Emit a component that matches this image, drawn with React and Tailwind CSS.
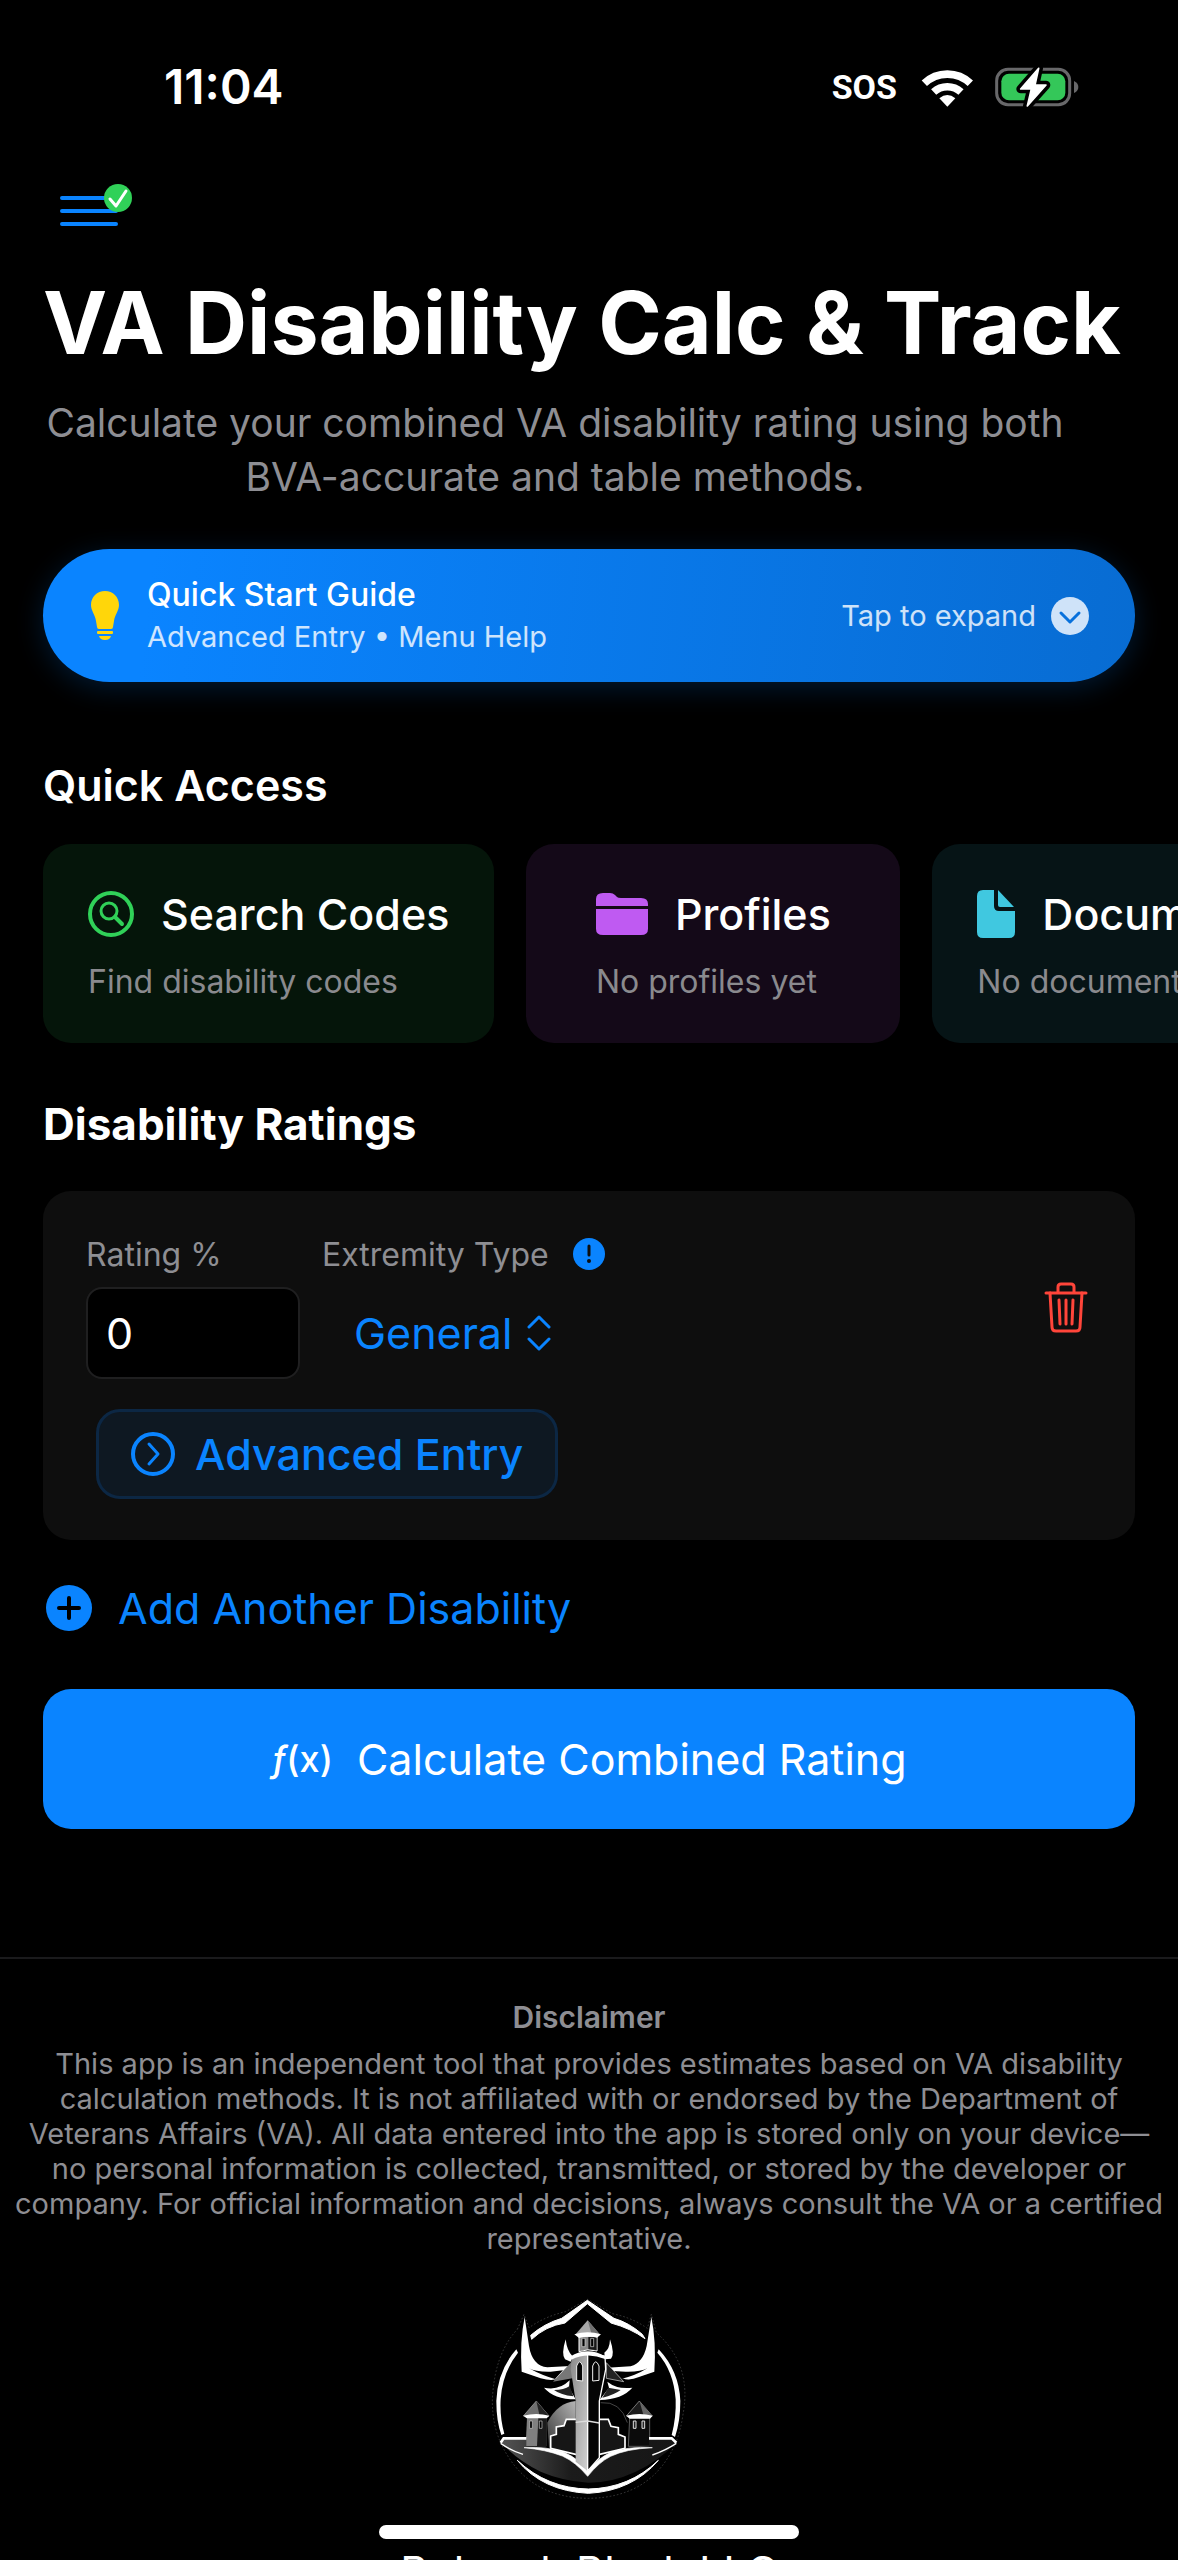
import { useState } from "react";

const hideScrollbar = "[scrollbar-width:none]";

function WifiIcon() {
  return (
    <svg viewBox="303 45 159 123" className="h-[41px] w-[53px]" aria-hidden="true">
      <g fill="none" stroke="#fff" strokeWidth="23">
        <path d="M313 94 A100 100 0 0 1 451 94" />
        <path d="M341 120 A61 61 0 0 1 423 120" />
      </g>
      <path d="M358 139 Q382 119 406 139 L382 164 Z" fill="#fff" />
    </svg>
  );
}

function BatteryIcon() {
  return (
    <svg viewBox="516 45 255 126" className="h-[42px] w-[85px]" aria-hidden="true">
      <rect x="524" y="55" width="219" height="106" rx="34" fill="none" stroke="#68686a" strokeWidth="9" />
      <path d="M756 90 Q769 96 769 108 Q769 120 756 126 Z" fill="#68686a" />
      <rect x="538" y="68" width="192" height="80" rx="23" fill="#34c759" />
      <path
        d="M650 52 L596 114 H628 L616 165 L672 102 H639 Z"
        fill="#fff"
        stroke="#000"
        strokeWidth="26"
        strokeLinejoin="round"
      />
      <path
        d="M650 52 L596 114 H628 L616 165 L672 102 H639 Z"
        fill="#fff"
        stroke="#fff"
        strokeWidth="5"
        strokeLinejoin="round"
      />
    </svg>
  );
}

function StatusBar() {
  return (
    <div className="flex h-[174px] shrink-0 items-center justify-between pl-[164px] pr-[99px]">
      <span className="text-[48px] font-semibold leading-none">11:04</span>
      <div className="flex items-center gap-5">
        <span className="mr-1 font-['Roboto',sans-serif] text-[34px] font-bold leading-none">SOS</span>
        <WifiIcon />
        <BatteryIcon />
      </div>
    </div>
  );
}

function MenuIcon() {
  return (
    <svg viewBox="0 0 76 46" className="h-[46px] w-[76px]" aria-hidden="true">
      <g stroke="#0a84ff" strokeWidth="4" strokeLinecap="round">
        <path d="M3 14H57M3 27H57M3 40H57" />
      </g>
      <circle cx="59" cy="14" r="14" fill="#30d158" />
      <path d="M51 15 L57 22 L67 7" fill="none" stroke="#fff" strokeWidth="3" strokeLinecap="round" strokeLinejoin="round" />
    </svg>
  );
}

function BulbIcon() {
  return (
    <svg viewBox="0 0 30 50" className="h-[50px] w-[30px]" fill="#ffd60a" aria-hidden="true">
      <path d="M15 0 C7 0 1 6 1 14 C1 20 5 23 6 30 L7 36 Q7 38 9 38 H21 Q23 38 23 36 L24 30 C25 23 29 20 29 14 C29 6 23 0 15 0 Z" />
      <rect x="7" y="40" width="16" height="3" rx="1" />
      <path d="M9 45 H21 Q20 49 15 49 Q10 49 9 45 Z" />
    </svg>
  );
}

function SearchCodesIcon() {
  return (
    <svg viewBox="0 0 46 46" className="size-[46px]" fill="none" stroke="#30d158" strokeLinecap="round" aria-hidden="true">
      <circle cx="23" cy="23" r="21" strokeWidth="4" />
      <circle cx="21" cy="20" r="8" strokeWidth="3" />
      <path d="M27 26 L34 33" strokeWidth="4" />
    </svg>
  );
}

function FolderIcon() {
  return (
    <svg viewBox="0 0 52 42" className="h-[42px] w-[52px]" fill="#bf5af2" aria-hidden="true">
      <path d="M0 13 V6 Q0 0 7 0 H14 Q17 0 19 2 L21 4 Q22 5 25 5 H45 Q52 5 52 11 V13 Z" />
      <path d="M0 16 H52 V36 Q52 42 45 42 H7 Q0 42 0 36 Z" />
    </svg>
  );
}

function DocumentIcon() {
  return (
    <svg viewBox="0 0 38 48" className="h-12 w-[38px]" fill="#40c8e0" aria-hidden="true">
      <path d="M6 0 H17 V16 Q17 21 22 21 H38 V42 Q38 48 32 48 H6 Q0 48 0 42 V6 Q0 0 6 0 Z" />
      <path d="M21 0 L37 17 H23 Q21 17 21 15 Z" />
    </svg>
  );
}

function TrashIcon() {
  return (
    <svg viewBox="0 0 44 52" className="h-[52px] w-11" fill="none" stroke="#ff453a" strokeLinecap="round" strokeLinejoin="round" aria-hidden="true">
      <path d="M2 12 H42" strokeWidth="3" />
      <path d="M14 11 V6 Q14 3 17 3 H27 Q30 3 30 6 V11" strokeWidth="3" />
      <path d="M6 12 L8 46 Q8 50 12 50 H32 Q36 50 36 46 L38 12" strokeWidth="3" />
      <path d="M15 19 L16 43 M22 19 V43 M29 19 L28 43" strokeWidth="3" />
    </svg>
  );
}

function CompanyLogo() {
  return (
    <svg viewBox="0 0 660 660" className="size-[220px]" role="img" aria-label="Bulwark Black logo">
      <defs>
        <linearGradient id="stone" x1="0" y1="0" x2="1" y2="1">
          <stop offset="0" stopColor="#8a8a8a" />
          <stop offset="1" stopColor="#d2d2d2" />
        </linearGradient>
        <linearGradient id="dome" x1="1" y1="0" x2="0" y2="1">
          <stop offset="0" stopColor="#b5b5b5" />
          <stop offset="1" stopColor="#3a3a3a" />
        </linearGradient>
        <linearGradient id="ground" x1="0" y1="0" x2="1" y2="0">
          <stop offset="0" stopColor="#555" />
          <stop offset="0.4" stopColor="#1b1b1b" />
          <stop offset="1" stopColor="#161616" />
        </linearGradient>
      </defs>

      {/* outer ring */}
      <path d="M115 115 L135 70 L150 110 Q200 75 260 62 L325 25 L400 68 Q460 80 505 112 L517 70 L532 125 Q640 220 612 370 Q605 420 590 455 Q520 620 328 622 Q140 620 65 455 Q40 400 40 330 Q45 190 115 115" fill="none" stroke="#555" strokeWidth="2" strokeDasharray="5 6" />
      <path d="M158 145 Q200 105 258 96 L325 38 L396 96 Q455 112 498 143 L490 130 Q450 95 405 82 L325 28 L248 82 Q195 98 155 133 Z" fill="#fff" stroke="#fff" strokeWidth="3" />
      <path d="M112 175 Q55 240 52 330 Q52 390 67 432 L76 428 Q62 380 65 325 Q70 245 117 185 Z" fill="#fff" />
      <path d="M539 175 Q600 240 604 330 Q604 390 588 438 L578 432 Q592 380 590 325 Q584 240 535 185 Z" fill="#fff" />
      <path d="M115 508 Q190 600 328 607 Q460 600 538 508 Q450 592 328 594 Q205 592 115 508 Z" fill="#fff" stroke="#fff" strokeWidth="3" />

      {/* horns */}
      <path d="M137 78 L150 165 Q160 225 205 229 L275 225 L250 252 Q235 275 185 262 L128 242 Q122 150 137 78 Z" fill="#fff" />
      <path d="M517 78 L503 165 Q492 215 455 226 L385 230 L415 252 Q440 275 480 258 L526 242 Q532 150 517 78 Z" fill="#fff" />
      <path d="M150 232 Q170 243 215 242 L252 238 L228 264 Q190 254 150 232 Z" fill="#000" />
      <path d="M505 232 Q485 243 440 242 L400 240 L426 264 Q470 254 505 232 Z" fill="#000" />
      <path d="M260 145 Q246 190 258 205 L275 212 L280 195 Q264 180 260 145 Z M393 145 Q408 190 396 203 L378 205 L376 185 Q392 175 393 145 Z" fill="#fff" />
      <path d="M195 290 Q240 300 272 268 L270 290 L290 325 Q225 325 195 290 Z M460 290 Q415 296 385 272 L390 290 L362 327 Q430 325 460 290 Z" fill="#fff" />
      <path d="M225 297 Q255 297 272 285 L283 316 Q245 312 225 297 Z M388 290 L425 297 Q405 312 370 320 Z" fill="#222" />
      <path d="M222 272 L278 212 L280 262 Z" fill="#777" />
      <path d="M434 272 L382 215 L382 262 Z" fill="#222" stroke="#ddd" strokeWidth="2" />

      {/* dome and gate */}
      <path d="M205 395 Q235 335 290 330 V470 H210 Z" fill="url(#dome)" />
      <path d="M365 335 Q425 330 445 395" fill="none" stroke="#666" strokeWidth="2" />
      <path d="M215 472 V435 L232 430 V408 L255 404 L262 385 H388 L396 406 L418 410 V430 L438 438 V472 L362 490 H290 Z" fill="#161616" stroke="#fff" strokeWidth="5" />

      {/* side towers */}
      <path d="M144 380 H202 V466 H140 Z" fill="#808080" />
      <path d="M178 380 H202 V466 H174 Z" fill="#1a1a1a" />
      <path d="M172 330 L210 375 H133 Z" fill="#6f6f6f" stroke="#aaa" strokeWidth="2" />
      <path d="M172 330 L210 375 H182 Z" fill="#222" />
      <path d="M133 374 Q172 364 211 374 L203 382 H143 Z" fill="#fff" />
      <path d="M152 390 h8 v22 h-8 Z M181 390 h8 v22 h-8 Z" fill="#000" stroke="#ccc" strokeWidth="2" />
      <path d="M452 380 H512 V466 H448 Z" fill="#0b0b0b" stroke="#888" strokeWidth="2" />
      <path d="M481 330 L520 375 H442 Z" fill="#1b1b1b" stroke="#aaa" strokeWidth="2" />
      <path d="M482 332 L520 375 H494 Z" fill="#666" />
      <path d="M442 374 Q481 364 521 374 L513 383 H452 Z" fill="#fff" />
      <path d="M463 390 h8 v22 h-8 Z M489 390 h8 v22 h-8 Z" fill="#222" stroke="#ddd" strokeWidth="3" />

      {/* ground */}
      <path d="M65 452 L74 442 H142 V466 L200 470 Q265 482 326 550 Q390 482 445 472 L510 466 V442 L580 440 L594 452 Q540 510 470 542 Q400 575 328 575 Q250 570 185 542 Q110 505 65 452 Z" fill="url(#ground)" />
      <path d="M65 455 L74 442 H142 M510 442 H578 L592 455" fill="none" stroke="#fff" strokeWidth="8" />
      <path d="M135 470 Q205 466 255 484 Q300 503 326 541 Q355 503 395 484 Q445 466 520 470 Q440 474 395 496 Q360 513 326 556 Q290 513 250 495 Q200 476 135 470 Z" fill="#fff" stroke="#fff" strokeWidth="2" />
      <path d="M65 457 Q95 478 132 490 M592 457 Q560 478 520 492" fill="none" stroke="#fff" strokeWidth="4" />

      {/* main tower */}
      <path d="M278 195 L326 188 V540 L290 512 V330 L275 235 Z" fill="url(#stone)" />
      <path d="M326 188 L378 195 L380 235 L361 330 V500 L326 540 Z" fill="#050505" stroke="#fff" strokeWidth="4" />
      <path d="M273 197 Q326 165 380 197 L378 204 Q326 182 277 206 Z" fill="#fff" />
      <path d="M293 268 V225 Q302 200 311 225 V270 Z M341 270 V225 Q350 200 360 225 V268 Z" fill="#050505" stroke="#eee" strokeWidth="3" />
      <path d="M290 394 L326 390 L361 396" fill="none" stroke="#ddd" strokeWidth="4" />
      <path d="M300 136 H354 V180 Q326 172 300 182 Z" fill="#888" stroke="#fff" strokeWidth="3" />
      <path d="M328 138 H353 V178 L328 174 Z" fill="#181818" />
      <path d="M309 142 h9 v25 h-9 Z M335 142 h9 v25 h-9 Z" fill="#000" stroke="#ddd" strokeWidth="2" />
      <path d="M326 88 L362 130 H290 Z" fill="#a8a8a8" />
      <path d="M326 88 L362 130 H338 Z" fill="#707070" />
      <path d="M286 130 Q326 118 366 130 L354 140 Q326 132 300 141 Z" fill="#fff" />
    </svg>
  );
}

const quickAccess = [
  { title: "Search Codes", note: "Find disability codes", icon: SearchCodesIcon, tint: "bg-[#05150a]" },
  { title: "Profiles", note: "No profiles yet", icon: FolderIcon, tint: "bg-[#140918]" },
  { title: "Documents", note: "No documents yet", icon: DocumentIcon, tint: "bg-[#061416]" },
];

function QuickCard({ title, note, icon: Icon, tint }) {
  return (
    <button type="button" className={`flex h-[199px] min-w-[374px] shrink-0 justify-center rounded-[28px] px-[45px] pt-[42px] text-left ${tint}`}>
      <span className="flex flex-col gap-[18px]">
        <span className="flex h-14 items-center gap-[27px] text-[43px] font-medium">
          <Icon />
          {title}
        </span>
        <span className="text-[32px] leading-[44px] text-[#8a8a8e]">{note}</span>
      </span>
    </button>
  );
}

function RatingCard() {
  const [rating, setRating] = useState("0");

  return (
    <div className="mt-[39px] flex items-start justify-between rounded-[28px] bg-[#0e0e0e] px-[43px] pb-[41px] pt-10">
      <div>
        <div className="flex gap-[22px]">
          <div className="flex w-[214px] flex-col">
            <label htmlFor="rating" className="h-14 text-[32px] leading-[48px] text-[#8e8e93]">
              Rating %
            </label>
            <input
              id="rating"
              inputMode="numeric"
              value={rating}
              onChange={(e) => setRating(e.target.value)}
              className="h-[92px] w-full rounded-2xl border-2 border-[#1f1f20] bg-black px-[18px] text-[43px] outline-none"
            />
          </div>

          <div className="flex flex-col">
            <div className="flex h-14 items-start gap-6">
              <label htmlFor="extremity" className="text-[32px] leading-[48px] text-[#8e8e93]">
                Extremity Type
              </label>
              <button type="button" aria-label="About extremity type" className="mt-[7px]">
                <svg viewBox="0 0 32 32" className="size-8" aria-hidden="true">
                  <circle cx="16" cy="16" r="16" fill="#0a84ff" />
                  <path d="M16 8 V17" stroke="#0e0e0e" strokeWidth="3" strokeLinecap="round" />
                  <circle cx="16" cy="23" r="2" fill="#0e0e0e" />
                </svg>
              </button>
            </div>
            <div className="flex h-[92px] items-center gap-3.5 pl-8 text-[#0a84ff]">
              <select id="extremity" className="appearance-none bg-transparent text-[43px] outline-none [field-sizing:content]">
                <option>General</option>
                <option>Upper</option>
                <option>Lower</option>
              </select>
              <svg viewBox="0 0 26 36" className="h-9 w-[26px]" fill="none" stroke="currentColor" strokeWidth="3" strokeLinecap="round" strokeLinejoin="round" aria-hidden="true">
                <path d="M3 12 L13 2 L23 12 M3 24 L13 34 L23 24" />
              </svg>
            </div>
          </div>
        </div>

        <button
          type="button"
          className="ml-[10px] mt-[30px] flex h-[90px] items-center gap-5 rounded-3xl border-[3px] border-[#0c2744] bg-[#0e1822] px-8 text-[43px] font-medium text-[#0a84ff]"
        >
          <svg viewBox="0 0 44 44" className="size-11" fill="none" stroke="currentColor" strokeLinecap="round" strokeLinejoin="round" aria-hidden="true">
            <circle cx="22" cy="22" r="20" strokeWidth="4" />
            <path d="M18 12 L27 22 L18 32" strokeWidth="3" />
          </svg>
          Advanced Entry
        </button>
      </div>

      <button type="button" aria-label="Delete disability" className="mr-1 mt-[50px]">
        <TrashIcon />
      </button>
    </div>
  );
}

export default function App() {
  return (
    <div className="relative flex h-screen flex-col overflow-hidden bg-black font-['Inter',sans-serif] text-white">
      <StatusBar />

      <div className={`min-h-0 flex-1 overflow-y-auto overflow-x-hidden ${hideScrollbar}`}>
        <main className="px-[43px]">
          <button type="button" aria-label="Menu" className="ml-4 flex h-[66px] items-center">
            <MenuIcon />
          </button>

          <h1 className="mt-[33px] whitespace-nowrap text-[86px] font-bold leading-[100px]">
            VA Disability Calc &amp; Track
          </h1>
          <p className="mr-[68px] mt-[23px] text-center text-[39px] leading-[54px] text-[#8e8e93]">
            Calculate your combined VA disability rating using both BVA-accurate and table methods.
          </p>

          <button
            type="button"
            className="mt-[45px] flex h-[133px] w-full items-center rounded-full bg-[linear-gradient(97deg,#0a84ff_10%,#086cd2)] pl-[47px] pr-[46px] text-left shadow-[0_6px_28px_rgba(10,132,255,0.2)]"
          >
            <BulbIcon />
            <span className="ml-[27px] flex flex-1 flex-col">
              <span className="text-[32px] font-medium leading-[43px]">Quick Start Guide</span>
              <span className="text-[29px] leading-[42px] text-white/80">Advanced Entry • Menu Help</span>
            </span>
            <span className="text-[29px] text-white/80">Tap to expand</span>
            <svg viewBox="0 0 38 38" className="ml-[15px] size-[38px]" aria-hidden="true">
              <circle cx="19" cy="19" r="19" fill="#cfe3f9" />
              <path d="M10 16 L19 25 L28 16" fill="none" stroke="#0871dc" strokeWidth="3" strokeLinecap="round" strokeLinejoin="round" />
            </svg>
          </button>

          <h2 className="mt-[75px] text-[43px] font-semibold leading-[56px]">Quick Access</h2>
          <div className={`-mx-[43px] mt-[31px] flex gap-8 overflow-x-auto px-[43px] ${hideScrollbar}`}>
            {quickAccess.map((item) => (
              <QuickCard key={item.title} {...item} />
            ))}
          </div>

          <h2 className="mt-[53px] text-[44px] font-bold leading-[56px]">Disability Ratings</h2>
          <RatingCard />

          <button type="button" className="mt-10 flex h-14 items-center gap-[26px] pl-[3px] text-[43px] text-[#0a84ff]">
            <svg viewBox="0 0 46 46" className="size-[46px]" aria-hidden="true">
              <circle cx="23" cy="23" r="23" fill="#0a84ff" />
              <path d="M23 13 V33 M13 23 H33" stroke="#000" strokeWidth="4" strokeLinecap="round" />
            </svg>
            Add Another Disability
          </button>

          <button
            type="button"
            className="mt-[53px] flex h-[140px] w-full items-center justify-center gap-6 rounded-[28px] bg-[#0a84ff] text-[43px]"
          >
            <span className="text-[36px] font-medium">
              <i>ƒ</i>(x)
            </span>
            Calculate Combined Rating
          </button>
        </main>

        <footer className="mt-32 flex flex-col items-center border-t-2 border-[#1a1a1c] pt-10 text-center text-[#8e8e93]">
          <h3 className="text-[30px] font-semibold leading-9">Disclaimer</h3>
          <p className="mt-[11px] text-[29px] leading-[35px]">
            This app is an independent tool that provides estimates based on VA disability
            <br />
            calculation methods. It is not affiliated with or endorsed by the Department of
            <br />
            Veterans Affairs (VA). All data entered into the app is stored only on your device—
            <br />
            no personal information is collected, transmitted, or stored by the developer or
            <br />
            company. For official information and decisions, always consult the VA or a certified
            <br />
            representative.
          </p>
          <div className="mt-[35px]">
            <CompanyLogo />
          </div>
          <p className="mt-8 text-[43px] leading-[56px] text-white">Bulwark Black LLC</p>
        </footer>
      </div>

      {/* home indicator */}
      <div className="absolute bottom-[21px] left-1/2 h-3.5 w-[420px] -translate-x-1/2 rounded-full bg-white" />
    </div>
  );
}
